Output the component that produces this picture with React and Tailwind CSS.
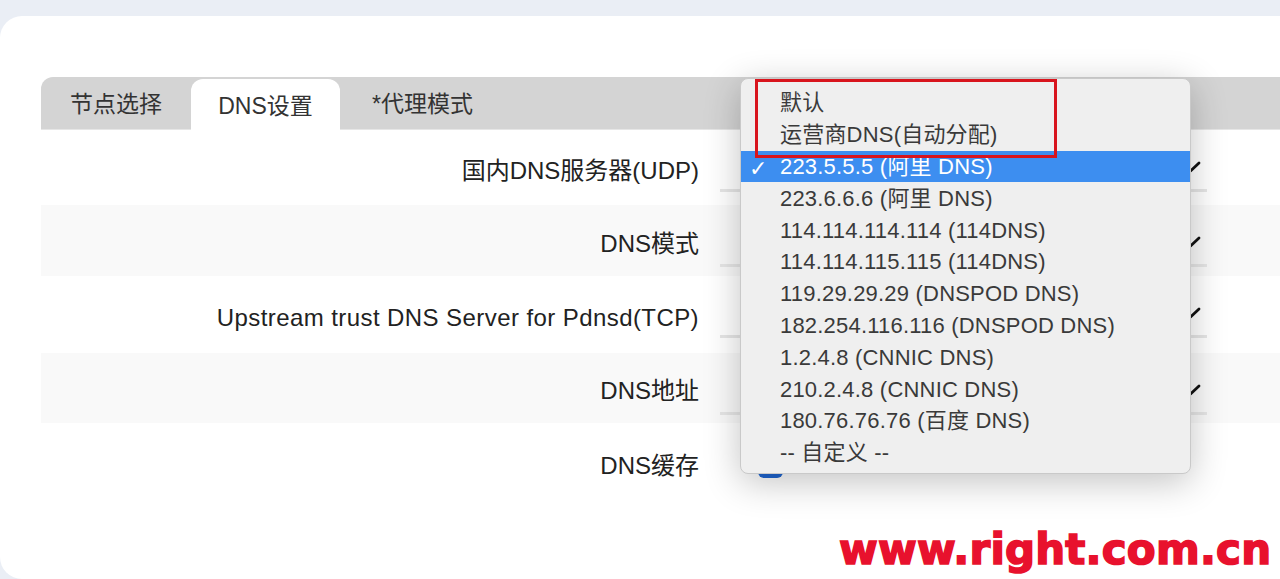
import React from "react";

const rows = [
  { label: "国内DNS服务器(UDP)", h: "h-[75px]", bg: "bg-white", kind: "select" },
  { label: "DNS模式", h: "h-[71px]", bg: "bg-[#f9f9f9]", kind: "select" },
  { label: "Upstream trust DNS Server for Pdnsd(TCP)", h: "h-[77px]", bg: "bg-white", kind: "select", wide: true },
  { label: "DNS地址", h: "h-[70px]", bg: "bg-[#f9f9f9]", kind: "select" },
  { label: "DNS缓存", h: "h-[80px]", bg: "bg-white", kind: "checkbox" },
];

const options = [
  "默认",
  "运营商DNS(自动分配)",
  "223.5.5.5 (阿里 DNS)",
  "223.6.6.6 (阿里 DNS)",
  "114.114.114.114 (114DNS)",
  "114.114.115.115 (114DNS)",
  "119.29.29.29 (DNSPOD DNS)",
  "182.254.116.116 (DNSPOD DNS)",
  "1.2.4.8 (CNNIC DNS)",
  "210.2.4.8 (CNNIC DNS)",
  "180.76.76.76 (百度 DNS)",
  "-- 自定义 --",
];

function FakeSelect() {
  // mostly hidden behind the open menu, only the right end shows
  return (
    <div className="relative w-[487px] h-[48px] mt-[14px] border-b-[3px] border-[#e6e6e6]">
      <svg className="absolute right-[6px] top-[17px]" width="16" height="12" viewBox="0 0 16 12">
        <path d="M2 7 L5.5 10 L14 2" fill="none" stroke="#111" strokeWidth="2.8" strokeLinecap="round" strokeLinejoin="round" />
      </svg>
    </div>
  );
}

export default function App() {
  return (
    <div className="relative w-[1280px] h-[579px] overflow-hidden bg-[#eaeef5] font-['Liberation_Sans','Noto_Sans_CJK_SC',sans-serif]">
      <div className="mt-[16px] h-[563px] bg-white rounded-tl-[22px] rounded-bl-[22px] pt-[61px] pl-[41px]">
        {/* tabs */}
        <div className="flex items-end h-[53px] bg-[#d4d4d4] rounded-tl-[12px] border-b border-[#e6e6e6] text-[23px] text-[#333]">
          <div className="w-[150px] h-full flex items-center justify-center pt-[3px]">节点选择</div>
          <div className="w-[149px] h-[51px] -mb-px bg-white rounded-t-[12px] flex items-center justify-center pt-[3px]">DNS设置</div>
          <div className="h-full flex items-center pl-[32px] pt-[3px]">*代理模式</div>
        </div>

        {rows.map((r) => (
          <div key={r.label} className={`flex ${r.h} ${r.bg}`}>
            <div className={`w-[658px] flex items-center justify-end pt-[6px] text-[24px] text-[#222] whitespace-nowrap ${r.wide ? "tracking-[0.42px]" : ""}`}>
              {r.label}
            </div>
            <div className="pl-[21px]">
              {r.kind === "select" ? (
                <FakeSelect />
              ) : (
                <div className="ml-[38px] mt-[30px] w-[25px] h-[25px] rounded-[6px] bg-[#1f66d1]" />
              )}
            </div>
          </div>
        ))}
      </div>

      {/* open select menu */}
      <div className="absolute left-[740px] top-[78px] w-[451px] h-[396px] bg-[#efefef] border border-[#c9c9c9] rounded-[8px] shadow-[0_8px_36px_rgba(0,0,0,0.24)] pt-[8px] text-[22px] text-[#3a3a3a] font-['Liberation_Sans','Noto_Sans_CJK_SC',sans-serif]">
        {options.map((o, i) => (
          <div
            key={o}
            className={`relative flex items-center h-[31.8px] pl-[39px] whitespace-nowrap tracking-[0.2px] ${i === 2 ? "bg-[#3d8ef0] text-white" : ""}`}
          >
            {i === 2 && <span className="absolute left-[8px] top-[1px] text-[22px] font-['DejaVu_Sans',sans-serif]">✓</span>}
            {o}
          </div>
        ))}
        <div className="absolute left-[14px] top-[0px] w-[302px] h-[79px] border-[3px] border-[#d8141d]" />
      </div>

      {/* watermark */}
      <div className="absolute left-[839px] top-[529px] text-[42px] font-bold leading-none text-[#e8112d] font-['DejaVu_Sans',sans-serif] tracking-[0.2px] [-webkit-text-stroke:1.6px_#e8112d]">
        www.right.com.cn
      </div>
    </div>
  );
}
